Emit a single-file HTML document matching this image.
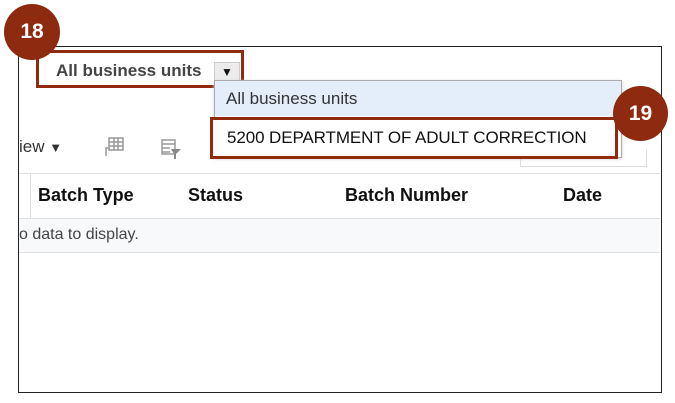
<!DOCTYPE html>
<html><head><style>
body{margin:0;width:675px;height:403px;background:#fff;position:relative;overflow:hidden;font-family:"Liberation Sans",Arial,sans-serif}
.a{position:absolute}
.circ{position:absolute;border-radius:50%;background:#8e2a10;color:#fff;font-weight:bold;font-size:21px;text-align:center}
</style></head><body>
<div class="a" style="left:18px;top:46px;width:642px;height:345px;border:1.5px solid #222;border-left-width:1.5px"></div>
<div class="a" style="left:19px;top:173px;width:641px;height:1px;background:#e0e0e0"></div>
<div class="a" style="left:30px;top:174px;width:1px;height:44px;background:#e0e0e0"></div>
<div class="a" style="left:19px;top:218px;width:641px;height:1px;background:#e0e0e0"></div>
<div class="a" style="left:19px;top:219px;width:641px;height:33px;background:#f8f9fa"></div>
<div class="a" style="left:19px;top:252px;width:641px;height:1px;background:#e0e0e0"></div>
<div class="a" style="left:19px;top:137px;font-size:17px;color:#333">iew <span style="font-size:13px">▼</span></div>
<svg class="a" style="left:102px;top:136px" width="24" height="24"><g fill="none" stroke="#999" stroke-width="1.5"><rect x="7" y="2" width="14" height="12"/><path d="M7 6h14M7 10h14M12 2v12M16 2v12M4 20v-8h4"/></g></svg>
<svg class="a" style="left:159px;top:137px" width="24" height="24"><g fill="none" stroke="#999" stroke-width="1.5"><rect x="3" y="3" width="13" height="14"/><path d="M3 7h13M3 11h8M3 15h8"/></g><path d="M12 12h10l-5 5v5h-2v-5z" fill="#888"/></svg>
<div class="a" style="left:38px;top:185px;font-size:18px;font-weight:bold;color:#111">Batch Type</div>
<div class="a" style="left:188px;top:185px;font-size:18px;font-weight:bold;color:#111">Status</div>
<div class="a" style="left:345px;top:185px;font-size:18px;font-weight:bold;color:#111">Batch Number</div>
<div class="a" style="left:563px;top:185px;font-size:18px;font-weight:bold;color:#111">Date</div>
<div class="a" style="left:19px;top:226px;font-size:16px;color:#444">o data to display.</div>
<div class="a" style="left:520px;top:150px;width:125px;height:16px;border:1px solid #ddd;border-top:none"></div>
<div class="a" style="left:56px;top:61px;font-size:17px;font-weight:bold;color:#444">All business units</div>
<div class="a" style="left:214px;top:62px;width:26px;height:19px;background:#ececec;border:1px solid #ccc;box-sizing:border-box;font-size:12px;text-align:center;line-height:18px;color:#111">▼</div>
<div class="a" style="left:36px;top:50px;width:208px;height:38px;border:3.5px solid #922a0e;box-sizing:border-box"></div>
<div class="a" style="left:214px;top:80px;width:408px;height:78px;border:1px solid #aaa;box-sizing:border-box;background:#fff;box-shadow:0 1px 3px #ccc"></div>
<div class="a" style="left:215px;top:81px;width:406px;height:35px;background:#e4eefb"></div>
<div class="a" style="left:226px;top:89px;font-size:17px;color:#333">All business units</div>
<div class="a" style="left:210px;top:117px;width:408px;height:42px;border:3.5px solid #922a0e;box-sizing:border-box;background:#fff"></div>
<div class="a" style="left:227px;top:128px;font-size:17px;color:#111;letter-spacing:-0.1px">5200 DEPARTMENT OF ADULT CORRECTION</div>
<div class="circ" style="left:4px;top:4px;width:56px;height:56px;line-height:56px">18</div>
<div class="circ" style="left:613px;top:86px;width:55px;height:55px;line-height:55px">19</div>
</body></html>
